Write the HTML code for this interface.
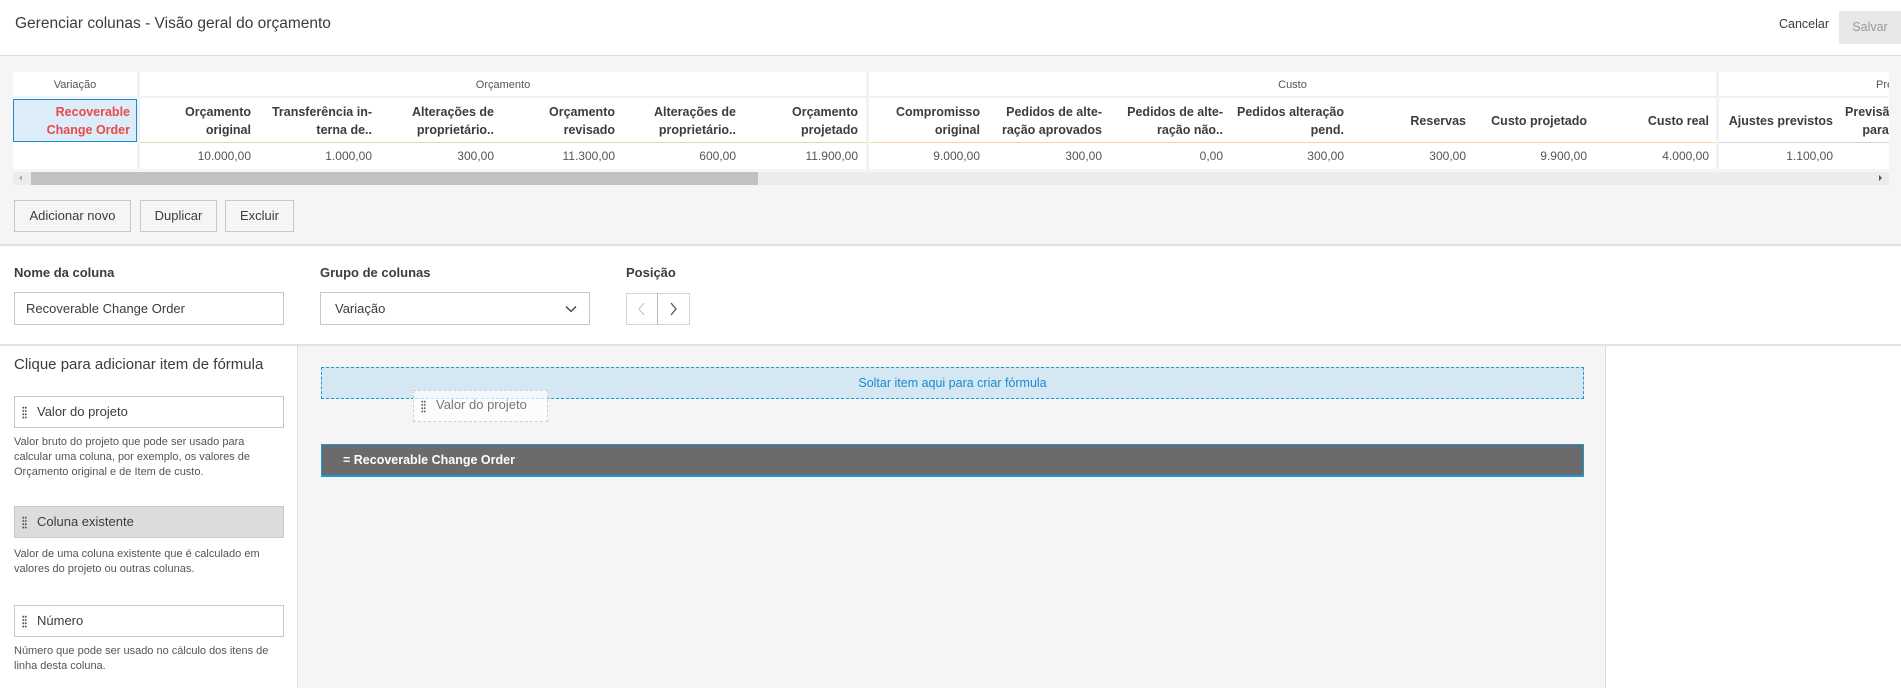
<!DOCTYPE html>
<html><head><meta charset="utf-8">
<style>
*{box-sizing:border-box;margin:0;padding:0}
body{width:1901px;height:688px;position:relative;overflow:hidden;background:#fff;font-family:"Liberation Sans",sans-serif;color:#3c3c3c}
.a{position:absolute}
.hdr{left:0;top:0;width:1901px;height:56px;background:#fff;border-bottom:1px solid #ddd}
.gray1{left:0;top:56px;width:1901px;height:190px;background:#f5f5f5;border-bottom:2px solid #e2e2e2}
.tbl{left:13px;top:72px;width:1876px;height:97px;background:#fff;overflow:hidden}
.grp{position:absolute;top:0;height:26px;font-size:11px;color:#555;text-align:center;line-height:26px;border-bottom:2px solid #f2f2f2}
.col{position:absolute;top:27px;height:44px;font-size:12.5px;font-weight:bold;color:#3c3c3c;text-align:right;padding-right:7px;line-height:18px;overflow:hidden;white-space:nowrap}
.val{position:absolute;top:72px;height:25px;font-size:12px;color:#555;text-align:right;padding-right:7px;line-height:25px}
.vsep{position:absolute;top:0;width:3px;height:97px;background:#f2f2f2}
.btn{top:200px;height:32px;border:1px solid #c8c8c8;background:#f5f5f5;font-size:13px;color:#3c3c3c;line-height:30px;text-align:center}
.lbl{top:265px;font-size:13px;font-weight:bold;color:#3c3c3c}
.inp{top:292px;height:33px;border:1px solid #c8c8c8;background:#fff;font-size:13px;line-height:31px;padding-left:11px}
.item{left:14px;width:270px;height:32px;border:1px solid #c8c8c8;background:#fff;font-size:13px;line-height:30px;padding-left:22px}
.item i{position:absolute;left:7px;top:9px;width:5px;height:13px;background-image:radial-gradient(circle,#555 0.9px,transparent 1.1px);background-size:2.5px 3.3px}
.desc{left:14px;width:270px;font-size:11px;line-height:15px;color:#555}
</style></head><body>
<div class="a hdr"></div>
<div class="a" style="left:15px;top:15px;font-size:15.5px;color:#3c3c3c">Gerenciar colunas - Visão geral do orçamento</div>
<div class="a" style="left:1779px;top:17px;font-size:12.5px;color:#3c3c3c">Cancelar</div>
<div class="a" style="left:1839px;top:11px;width:62px;height:33px;background:#e8e8e8;color:#999;font-size:12.5px;line-height:33px;text-align:center">Salvar</div>

<div class="a gray1"></div>
<div class="a tbl">
  <div class="grp" style="left:0;width:124px">Variação</div>
  <div class="grp" style="left:127px;width:726px">Orçamento</div>
  <div class="grp" style="left:856px;width:847px">Custo</div>
  <div class="grp" style="left:1706px;width:300px;text-align:left;padding-left:157px">Previsão</div>
  <div class="vsep" style="left:124px"></div>
  <div class="vsep" style="left:853px"></div>
  <div class="vsep" style="left:1703px"></div>
  <div class="a" style="left:0;top:27px;width:124px;height:43px;background:#dcecf8;border:1px solid #1a8ad4;color:#e84a4a;font-size:12.5px;font-weight:bold;text-align:right;padding-right:6px;line-height:18px;padding-top:3px">Recoverable<br>Change Order</div>
  <div class="a" style="left:127px;top:70px;width:726px;height:1px;background:#c9e1b5"></div>
  <div class="a" style="left:856px;top:70px;width:847px;height:1px;background:#f6d79a"></div>
  <div class="a" style="left:1706px;top:70px;width:200px;height:1px;background:#c9d6ea"></div>
  <div class="a" style="left:0;top:71px;width:124px;height:26px;background:#fff"></div>

  <div class="col" style="left:124px;width:121px;padding-top:4px">Orçamento<br>original</div>
  <div class="val" style="left:124px;width:121px">10.000,00</div>
  <div class="col" style="left:245px;width:121px;padding-top:4px">Transferência in-<br>terna de..</div>
  <div class="val" style="left:245px;width:121px">1.000,00</div>
  <div class="col" style="left:366px;width:122px;padding-top:4px">Alterações de<br>proprietário..</div>
  <div class="val" style="left:366px;width:122px">300,00</div>
  <div class="col" style="left:488px;width:121px;padding-top:4px">Orçamento<br>revisado</div>
  <div class="val" style="left:488px;width:121px">11.300,00</div>
  <div class="col" style="left:609px;width:121px;padding-top:4px">Alterações de<br>proprietário..</div>
  <div class="val" style="left:609px;width:121px">600,00</div>
  <div class="col" style="left:730px;width:122px;padding-top:4px">Orçamento<br>projetado</div>
  <div class="val" style="left:730px;width:122px">11.900,00</div>

  <div class="col" style="left:853px;width:121px;padding-top:4px">Compromisso<br>original</div>
  <div class="val" style="left:853px;width:121px">9.000,00</div>
  <div class="col" style="left:974px;width:122px;padding-top:4px">Pedidos de alte-<br>ração aprovados</div>
  <div class="val" style="left:974px;width:122px">300,00</div>
  <div class="col" style="left:1096px;width:121px;padding-top:4px">Pedidos de alte-<br>ração não..</div>
  <div class="val" style="left:1096px;width:121px">0,00</div>
  <div class="col" style="left:1217px;width:121px;padding-top:4px">Pedidos alteração<br>pend.</div>
  <div class="val" style="left:1217px;width:121px">300,00</div>
  <div class="col" style="left:1338px;width:122px;line-height:44px">Reservas</div>
  <div class="val" style="left:1338px;width:122px">300,00</div>
  <div class="col" style="left:1460px;width:121px;line-height:44px">Custo projetado</div>
  <div class="val" style="left:1460px;width:121px">9.900,00</div>
  <div class="col" style="left:1581px;width:122px;line-height:44px">Custo real</div>
  <div class="val" style="left:1581px;width:122px">4.000,00</div>

  <div class="col" style="left:1706px;width:121px;line-height:44px">Ajustes previstos</div>
  <div class="val" style="left:1706px;width:121px">1.100,00</div>
  <div class="col" style="left:1832px;width:121px;padding-top:4px;text-align:left">Previsão<br>&nbsp;&nbsp;&nbsp;&nbsp;&nbsp;para</div>
</div>
<div class="a" style="left:13px;top:172px;width:1876px;height:13px;background:#ececec"></div>
<div class="a" style="left:31px;top:172px;width:727px;height:13px;background:#c1c1c1"></div>
<div class="a" style="left:19px;top:175px;width:0;height:0;border-top:3px solid transparent;border-bottom:3px solid transparent;border-right:3px solid #aaa"></div>
<div class="a" style="left:1879px;top:175px;width:0;height:0;border-top:3px solid transparent;border-bottom:3px solid transparent;border-left:3px solid #555"></div>

<div class="a btn" style="left:14px;width:117px">Adicionar novo</div>
<div class="a btn" style="left:140px;width:77px">Duplicar</div>
<div class="a btn" style="left:225px;width:69px">Excluir</div>

<div class="a lbl" style="left:14px">Nome da coluna</div>
<div class="a lbl" style="left:320px">Grupo de colunas</div>
<div class="a lbl" style="left:626px">Posição</div>
<div class="a inp" style="left:14px;width:270px">Recoverable Change Order</div>
<div class="a inp" style="left:320px;width:270px;padding-left:14px">Variação
  <svg class="a" style="left:244px;top:12px" width="12" height="8" viewBox="0 0 12 8"><path d="M1 1.5 L6 6.5 L11 1.5" fill="none" stroke="#3c3c3c" stroke-width="1.3"/></svg></div>
<div class="a" style="left:626px;top:293px;width:64px;height:32px;border:1px solid #d4d4d4;background:#fff"></div>
<div class="a" style="left:657px;top:293px;width:1px;height:32px;background:#bbb"></div>
<svg class="a" style="left:637px;top:302px" width="10" height="14" viewBox="0 0 10 14"><path d="M7 1 L2 7 L7 13" fill="none" stroke="#c8c8c8" stroke-width="1.3"/></svg>
<svg class="a" style="left:668px;top:302px" width="10" height="14" viewBox="0 0 10 14"><path d="M3 1 L8 7 L3 13" fill="none" stroke="#555" stroke-width="1.3"/></svg>

<div class="a" style="left:0;top:344px;width:1901px;height:2px;background:#e2e2e2"></div>
<div class="a" style="left:297px;top:346px;width:1309px;height:342px;background:#f5f5f5;border-left:1px solid #ddd;border-right:1px solid #ddd"></div>

<div class="a" style="left:14px;top:356px;font-size:15px;color:#3c3c3c">Clique para adicionar item de fórmula</div>
<div class="a item" style="top:396px"><i></i>Valor do projeto</div>
<div class="a desc" style="top:435px">Valor bruto do projeto que pode ser usado para calcular uma coluna, por exemplo, os valores de Orçamento original e de Item de custo.</div>
<div class="a item" style="top:506px;background:#dcdcdc"><i></i>Coluna existente</div>
<div class="a desc" style="top:547px">Valor de uma coluna existente que é calculado em valores do projeto ou outras colunas.</div>
<div class="a item" style="top:605px"><i></i>Número</div>
<div class="a desc" style="top:644px">Número que pode ser usado no cálculo dos itens de linha desta coluna.</div>

<div class="a" style="left:321px;top:367px;width:1263px;height:32px;background:#d4e7f2;border:1px dashed #1a9ad6;color:#1a8ad4;font-size:12.5px;text-align:center;line-height:30px">Soltar item aqui para criar fórmula</div>
<div class="a" style="left:413px;top:390px;width:135px;height:32px;background:rgba(255,255,255,0.7);border:1px dashed #d0d0d0;color:#777;font-size:13px;line-height:28px;padding-left:22px">
  <span class="a" style="left:7px;top:9px;width:5px;height:13px;background-image:radial-gradient(circle,#666 0.9px,transparent 1.1px);background-size:2.5px 3.3px"></span>Valor do projeto</div>
<div class="a" style="left:321px;top:444px;width:1263px;height:33px;background:#6b6b6b;border:1px solid #1a9ad6;border-bottom-width:2px;color:#fff;font-size:12.5px;font-weight:bold;line-height:30px;padding-left:21px">= Recoverable Change Order</div>
</body></html>
